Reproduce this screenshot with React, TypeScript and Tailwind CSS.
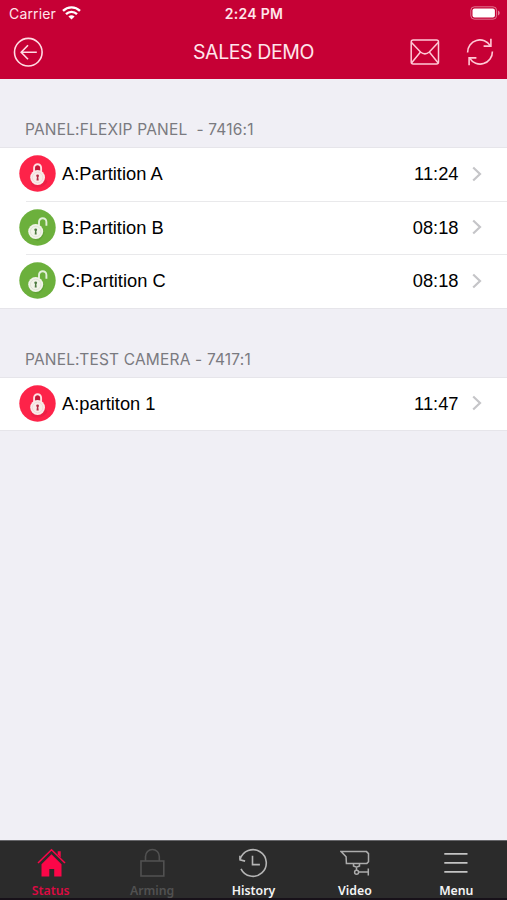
import type { ReactNode } from "react";

type Partition = {
  name: string;
  time: string;
  armed: boolean;
};

type Panel = {
  id: string;
  title: string;
  partitions: Partition[];
};

type Tab = {
  label: string;
  icon: ReactNode;
  color: string;
  labelColor: string;
};

const panels: Panel[] = [
  {
    id: "7416",
    title: "PANEL:FLEXIP PANEL  - 7416:1",
    partitions: [
      { name: "A:Partition A", time: "11:24", armed: true },
      { name: "B:Partition B", time: "08:18", armed: false },
      { name: "C:Partition C", time: "08:18", armed: false },
    ],
  },
  {
    id: "7417",
    title: "PANEL:TEST CAMERA - 7417:1",
    partitions: [{ name: "A:partiton 1", time: "11:47", armed: true }],
  },
];

function WifiIcon() {
  return (
    <svg className="mb-0.5" width="19" height="14" viewBox="0 0 19 14" fill="none" stroke="white" strokeWidth="2.4">
      <path d="M1 4.8a12.2 12.2 0 0 1 17 0" />
      <path d="M4 8.1a8 8 0 0 1 11 0" />
      <path d="M9.5 13.6 6.4 10.6a4.6 4.6 0 0 1 6.2 0z" fill="white" stroke="none" />
    </svg>
  );
}

function BatteryIcon() {
  return (
    <svg className="mb-0.5" width="31" height="14" viewBox="0 0 31 14" fill="none">
      <rect x="0.8" y="0.8" width="25.8" height="12.4" rx="3.6" stroke="white" strokeOpacity="0.45" />
      <rect x="2.5" y="2.5" width="22.4" height="9" rx="2" fill="white" />
      <path d="M28 4.6v4.8c1-.4 1.7-1.3 1.7-2.4s-.7-2-1.7-2.4z" fill="white" fillOpacity="0.5" />
    </svg>
  );
}

function BackIcon() {
  return (
    <svg width="30" height="30" viewBox="0 0 30 30" fill="none" stroke="#ffdce4" strokeWidth="1.6">
      <circle cx="15.3" cy="15.2" r="13.8" />
      <path d="M23.8 15.2H8.3M15 8.2 8.2 15.2l6.8 7" />
    </svg>
  );
}

function MailIcon() {
  return (
    <svg width="30" height="26" viewBox="0 0 30 26" fill="none" stroke="#ffc9d6" strokeWidth="1.5">
      <rect x="1.2" y="0.9" width="27.3" height="24" rx="2" />
      <path d="M1.5 3.5 10.5 13q4.4 3.7 8.8 0L28.2 3.5" />
      <path d="M1.7 23.8 10.5 13M28 23.8 19.3 13" />
    </svg>
  );
}

function RefreshIcon() {
  return (
    <svg width="28" height="28" viewBox="0 0 28 28" fill="none" stroke="#ffc9d6" strokeWidth="1.6">
      <path d="M1.6 14.5a12.3 12.3 0 0 1 22.8-6.7" />
      <path d="M26.4 13.5a12.3 12.3 0 0 1-22.8 6.7" />
      <path d="M24.9 0.8v7.3h-7.3M3.1 27.2v-7.3h7.3" />
    </svg>
  );
}

function LockBadge({ armed }: { armed: boolean }) {
  return (
    <svg className="-ml-[7px] mb-px shrink-0" width="37" height="37" viewBox="0 0 37 37" fill="none">
      <circle cx="18.5" cy="18.5" r="18.2" fill={armed ? "#fd2349" : "#6cb03c"} />
      {armed ? (
        <>
          <path d="M12 24h14.5l2 3a12 12 0 0 1-16 4z" fill="#d91c40" fillOpacity="0.45" />
          <path d="M15.1 18v-5.3a3.5 3.5 0 0 1 7 0V18" fill="#c5183a" stroke="#ffdfe2" strokeWidth="1.9" />
          <circle cx="18.6" cy="22.5" r="7.4" fill="#faebe8" />
          <circle cx="18.6" cy="22.5" r="5.3" stroke="#e6d5d2" strokeWidth="0.7" />
          <circle cx="18.6" cy="20.8" r="1.4" fill="#b52d45" />
          <path d="M18 21.3h1.2l.5 4.2h-2.200z" fill="#b52d45" />
        </>
      ) : (
        <>
          <path d="m23.5 20 2 3.5a13 13 0 0 1-6.5 8.5l-6-2z" fill="#4d8d2b" fillOpacity="0.35" />
          <path d="M20 16.500v-3.600a3.700 3.700 0 0 1 7.400 0v3.900" stroke="#e3f0d9" strokeWidth="1.9" />
          <circle cx="16.7" cy="22.5" r="7.5" fill="#f1f4e9" />
          <circle cx="16.7" cy="22.5" r="5.3" stroke="#d8dece" strokeWidth="0.7" />
          <circle cx="16.7" cy="20.8" r="1.4" fill="#4e7b42" />
          <path d="M16.100 21.300h1.200l.4 4.200h-2z" fill="#4e7b42" />
        </>
      )}
    </svg>
  );
}

function Chevron() {
  return (
    <svg className="mb-px" width="10" height="16" viewBox="0 0 10 16" fill="none" stroke="#c5c5c8" strokeWidth="2.2">
      <path d="m1.2 1.500 6.800 6.500-6.800 6.500" />
    </svg>
  );
}

const tabs: Tab[] = [
  {
    label: "Status",
    color: "text-[#fb0648]",
    labelColor: "text-[#dc0a43]",
    icon: (
      <svg width="30" height="30" viewBox="0 0 30 30" fill="currentColor">
        <path d="M5.500 16.300 15.500 6.200l10 10.100V28.500h-7.300v-7.400h-4.900v7.400H5.500z" />
        <path d="m2 15 13.500-13.200L29 15" fill="none" stroke="currentColor" strokeWidth="1.5" />
        <path d="M21.700 3.300h3v6.100l-3-2.900z" />
      </svg>
    ),
  },
  {
    label: "Arming",
    color: "text-[#515151]",
    labelColor: "text-[#515151]",
    icon: (
      <svg width="30" height="30" viewBox="0 0 30 30" fill="none" stroke="currentColor" strokeWidth="1.6">
        <rect x="4" y="13" width="22.8" height="15" />
        <path d="M8.500 13V8.400a6.900 6.900 0 0 1 13.800 0V13" />
      </svg>
    ),
  },
  {
    label: "History",
    color: "text-white",
    labelColor: "text-[#f4f4f4]",
    icon: (
      <svg width="30" height="30" viewBox="0 0 30 30" fill="none" stroke="#b5b5b5" strokeWidth="1.6">
        <path d="M2.200 11.300a13.300 13.300 0 1 1 .8 9.500" />
        <path d="m1.900 7.800.1 4.100 5.100 1.200M14.500 7.700v8.900h7.400" />
      </svg>
    ),
  },
  {
    label: "Video",
    color: "text-white",
    labelColor: "text-[#f4f4f4]",
    icon: (
      <svg width="30" height="30" viewBox="0 0 30 30" fill="none" stroke="#acacac" strokeWidth="1.5">
        <path d="M1.200 3.600h25.300l2 2v8.200l-1.600 1.600H6.400l-.3-6.600z" />
        <path d="M13.500 15.400v2.500l3 1.200 3-1.200v-2.500M16.500 19v3.400M18.500 24h9.700M28.300 20.500v7" />
        <circle cx="16.6" cy="24.2" r="2" />
      </svg>
    ),
  },
  {
    label: "Menu",
    color: "text-white",
    labelColor: "text-[#f4f4f4]",
    icon: (
      <svg width="30" height="30" viewBox="0 0 30 30" fill="none" stroke="#c4c4c4" strokeWidth="1.8">
        <path d="M3.300 5.900h23.200M3.300 14.900h23.200M3.300 23.900h23.200" />
      </svg>
    ),
  },
];

function PartitionRow({ partition, last }: { partition: Partition; last: boolean }) {
  return (
    <button className="block h-[53.5px] w-full bg-white pl-[26px] text-left last:h-[52.5px]">
      <span
        className={`flex h-full items-center pr-[25px] font-['Liberation_Sans',Arial,sans-serif] text-[18.3px] text-black ${
          last ? "" : "border-b border-[#e9e9eb]"
        }`}
      >
        <LockBadge armed={partition.armed} />
        <span className="mb-px ml-1.5 flex-1">{partition.name}</span>
        <span className="mb-px mr-[13.5px]">{partition.time}</span>
        <Chevron />
      </span>
    </button>
  );
}

export default function App() {
  return (
    <div className="flex h-[900px] w-[507px] flex-col overflow-hidden bg-[#f0eff5] font-[Inter,sans-serif]">
      <header className="h-[79px] shrink-0 bg-[#c60035] text-[#ffe5eb]">
        <div className="grid h-[27px] grid-cols-3 items-center pl-[9px] pr-[6px]">
          <div className="flex items-center gap-[6px] text-[14px] tracking-[0.15px]">
            <span>Carrier</span>
            <WifiIcon />
          </div>
          <p className="pr-[2px] text-center text-[14px] font-semibold tracking-[0.3px]">2:24 PM</p>
          <div className="flex justify-end">
            <BatteryIcon />
          </div>
        </div>
        <div className="grid h-[50px] grid-cols-3 items-center px-[13px]">
          <button className="w-[30px]">
            <BackIcon />
          </button>
          <h1 className="pt-0.5 text-center text-[19.5px] tracking-[-0.4px]">SALES DEMO</h1>
          <div className="flex items-center justify-end gap-[26px]">
            <MailIcon />
            <RefreshIcon />
          </div>
        </div>
      </header>

      <main className="flex-1">
        {panels.map((panel) => (
          <section key={panel.id}>
            <h2 className="flex h-[68px] items-end whitespace-pre pb-[7px] pl-[25px] text-[15.5px] leading-5 tracking-[0.18px] text-[#7a7a80]">
              {panel.title}
            </h2>
            <div className="border-y border-[#e6e5ea]">
              {panel.partitions.map((partition, i) => (
                <PartitionRow
                  key={partition.name}
                  partition={partition}
                  last={i === panel.partitions.length - 1}
                />
              ))}
            </div>
          </section>
        ))}
      </main>

      <nav className="grid h-[60px] shrink-0 grid-cols-5 border-t border-b-2 border-t-[#66666a] border-b-[#171119] bg-[#2b2b2b]">
        {tabs.map((tab) => (
          <button key={tab.label} className={`flex flex-col items-center pt-[7px] ${tab.color}`}>
            {tab.icon}
            <span
              className={`mt-1 font-['Noto_Sans',sans-serif] text-[12.3px] font-semibold leading-[17px] ${tab.labelColor}`}
            >
              {tab.label}
            </span>
          </button>
        ))}
      </nav>
    </div>
  );
}
